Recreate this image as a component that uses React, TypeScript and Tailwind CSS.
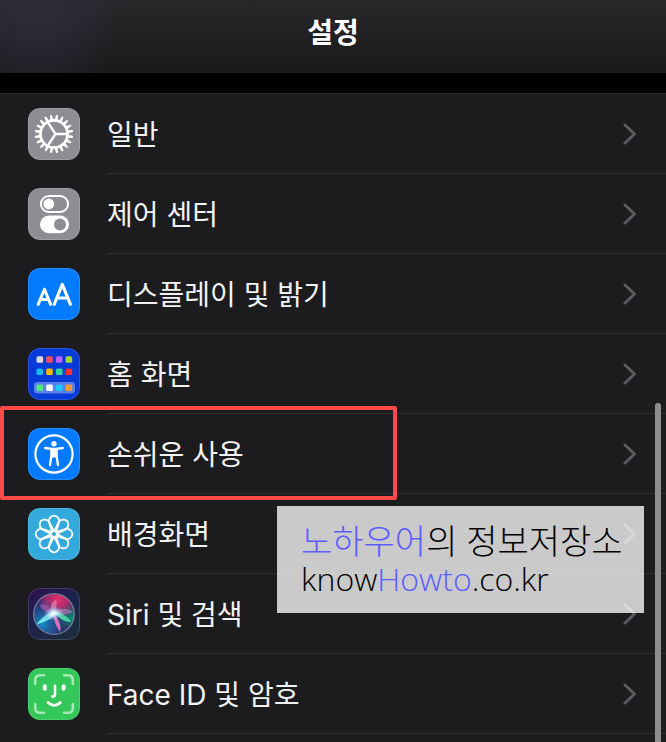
import type { ReactNode } from "react";

const GEAR_TEETH = Array.from({ length: 20 }, (_, i) => i * 18);
const PETALS = Array.from({ length: 8 }, (_, i) => i * 45);

function Tile({ className, children }: { className: string; children: ReactNode }) {
  return (
    <svg viewBox="0 0 52 52" aria-hidden="true" className={`size-[52px] shrink-0 rounded-xl ${className}`}>
      {children}
      <rect x="0.5" y="0.5" width="51" height="51" rx="11.5" fill="none" stroke="#fff" strokeOpacity="0.14" />
    </svg>
  );
}

function GearIcon() {
  return (
    <Tile className="bg-[#8e8d93]">
      <g stroke="#fff" fill="none">
        <circle cx="26" cy="26" r="13.6" strokeWidth="2.8" />
        {GEAR_TEETH.map((angle) => (
          <path key={angle} d="M24.4 12.4 L25.1 6.8 H26.9 L27.6 12.4 Z" fill="#fff" stroke="none" transform={`rotate(${angle + 9} 26 26)`} />
        ))}
        <path d="M39 26 H27.5 L19.6 14 M27.5 26 L19.6 38" strokeWidth="2.3" strokeLinejoin="round" />
      </g>
    </Tile>
  );
}

function ControlIcon() {
  return (
    <Tile className="bg-[#8e8d93]">
      <rect x="12.9" y="8" width="27.2" height="16" rx="8" fill="none" stroke="#fff" strokeWidth="2" />
      <circle cx="20.8" cy="16" r="5.4" fill="#fff" />
      <rect x="12" y="27.6" width="29" height="17.6" rx="8.8" fill="#fff" />
      <circle cx="32" cy="36.4" r="6" fill="#8e8d93" />
    </Tile>
  );
}

function DisplayIcon() {
  return (
    <Tile className="bg-[#047bff]">
      <g fill="none" stroke="#fff" strokeLinecap="round" strokeLinejoin="round">
        <path d="M10.2 36.4 L16.4 21.2 L22.6 36.4 M12.3 31.6 H20.5" strokeWidth="3" />
        <path d="M26.2 36.4 L34.3 16.4 L42.4 36.4 M29 30 H39.6" strokeWidth="3.1" />
      </g>
    </Tile>
  );
}

const HOME_DOTS = [
  ["#d9dae0", "#ff4963", "#b963fa", "#a9d92c"],
  ["#19b9fa", "#ffb900", "#35d3a0", "#ff3030"],
  ["#4fe879", "#ffffff", "#19c6fa", "#ff983b"],
];
const HOME_ROWS = [8.2, 20.4, 36.4];

function HomeIcon() {
  return (
    <Tile className="bg-[#063bd8]">
      <rect x="6" y="34" width="41" height="11.4" rx="3.5" fill="#5c80ed" />
      {HOME_DOTS.map((row, r) =>
        row.map((color, c) => (
          <rect key={color} x={8.5 + c * 9.7} y={HOME_ROWS[r]} width="6.6" height="6.6" rx="1.5" fill={color} />
        )),
      )}
    </Tile>
  );
}

function AccessibilityIcon() {
  return (
    <Tile className="bg-[#047bff]">
      <circle cx="26" cy="26" r="18.6" fill="none" stroke="#fff" strokeWidth="2.2" />
      <circle cx="26" cy="15.8" r="2.7" fill="#fff" />
      <path d="M17.2 20 L23.8 20.9 H28.2 L34.8 20" fill="none" stroke="#fff" strokeWidth="2.3" strokeLinecap="round" />
      <path d="M23.4 21 V28 L22 37 M28.6 21 V28 L30 37" fill="none" stroke="#fff" strokeWidth="2.3" strokeLinecap="round" strokeLinejoin="round" />
      <path d="M22.8 20.8 H29.2 V29.6 H22.8 Z" fill="#fff" />
    </Tile>
  );
}

function WallpaperIcon() {
  return (
    <Tile className="bg-[#34aadc]">
      <g fill="none" stroke="#fff" strokeWidth="1.8">
        {PETALS.map((angle) => (
          <path key={angle} d="M26 23.3 L21.9 15.4 A4.9 4.9 0 1 1 30.1 15.4 Z" strokeLinejoin="round" transform={`rotate(${angle} 26 26)`} />
        ))}
        <circle cx="26" cy="26" r="3.1" strokeWidth="1.5" />
      </g>
    </Tile>
  );
}

function SiriIcon() {
  return (
    <Tile className="bg-[#202347]">
      <defs>
        <linearGradient id="siri-tile" x1="0" y1="0" x2="0.6" y2="1">
          <stop offset="0" stopColor="#30104e" />
          <stop offset="0.5" stopColor="#1b234e" />
          <stop offset="1" stopColor="#1d2b40" />
        </linearGradient>
        <radialGradient id="siri-red" cx="0.62" cy="0.12" r="0.55">
          <stop offset="0" stopColor="#e8306b" />
          <stop offset="0.6" stopColor="#b82b70" stopOpacity="0.8" />
          <stop offset="1" stopColor="#822c80" stopOpacity="0" />
        </radialGradient>
        <radialGradient id="siri-blue" cx="0.2" cy="0.75" r="0.65">
          <stop offset="0" stopColor="#158ccb" />
          <stop offset="1" stopColor="#155e9f" stopOpacity="0" />
        </radialGradient>
        <radialGradient id="siri-green" cx="0.94" cy="0.6" r="0.4">
          <stop offset="0" stopColor="#0c8f78" />
          <stop offset="1" stopColor="#0a6260" stopOpacity="0" />
        </radialGradient>
        <radialGradient id="siri-glow">
          <stop offset="0" stopColor="#fff" />
          <stop offset="0.3" stopColor="#dff8ff" stopOpacity="0.9" />
          <stop offset="1" stopColor="#9fc6ff" stopOpacity="0" />
        </radialGradient>
      </defs>
      <rect width="52" height="52" fill="url(#siri-tile)" />
      <circle cx="26" cy="26" r="20" fill="#34245f" />
      <circle cx="26" cy="26" r="20" fill="url(#siri-red)" />
      <circle cx="26" cy="26" r="20" fill="url(#siri-blue)" />
      <circle cx="26" cy="26" r="20" fill="url(#siri-green)" />
      <path d="M28 24 C20 24 13 30 8.5 36.5 C17 34 25 31 28 24" fill="#7df4f2" fillOpacity="0.85" />
      <path d="M26 26 C23 20 17 14 12 17 C14 23 20 25 26 26" fill="#c766b8" fillOpacity="0.5" />
      <path d="M25 26 C28 20 30 15 28 12 C23 13 21 21 25 26" fill="#f6a0bc" fillOpacity="0.55" />
      <path d="M26 26 C30 20 39 19 45 24 C38 27 32 28 26 26" fill="#bd80c7" fillOpacity="0.6" />
      <path d="M27 24 C33 24 41 29 43 34 C36 34 30 30 27 24" fill="#55edae" fillOpacity="0.8" />
      <path d="M25 26 C26 32 28 39 32 44 C34 37 30 30 25 26" fill="#f779c2" fillOpacity="0.85" />
      <ellipse cx="25.5" cy="25.5" rx="10" ry="7" fill="url(#siri-glow)" transform="rotate(-15 25.5 25.5)" />
      <circle cx="26" cy="26" r="20.3" fill="none" stroke="#8f9bb3" strokeOpacity="0.75" strokeWidth="1.3" />
    </Tile>
  );
}

function FaceIdIcon() {
  return (
    <Tile className="bg-[#34c759]">
      <g fill="none" strokeLinecap="round">
        <path d="M7.2 16 V12 Q7.2 7.2 12 7.2 H16 M36 7.2 H40 Q44.8 7.2 44.8 12 V16 M44.8 36 V40 Q44.8 44.8 40 44.8 H36 M16 44.8 H12 Q7.2 44.8 7.2 40 V36" stroke="#a5e8b5" strokeWidth="2.6" />
        <path d="M16.8 18.2 V20.8 M35.6 18.2 V20.8" stroke="#fff" strokeWidth="4" />
        <path d="M27 17.8 V26 Q27 28.6 24.3 28.6" stroke="#fff" strokeWidth="2.6" />
        <path d="M20 34.6 Q26 40.2 32.4 34.6" stroke="#fff" strokeWidth="2.8" />
      </g>
    </Tile>
  );
}

function Chevron() {
  return (
    <svg viewBox="0 0 14 24" aria-hidden="true" className="h-6 w-3.5 shrink-0">
      <path d="M2 3 L11.5 12 L2 21" fill="none" stroke="#5b5b60" strokeWidth="3" strokeLinecap="round" strokeLinejoin="round" />
    </svg>
  );
}

const ITEMS = [
  { label: "일반", icon: <GearIcon /> },
  { label: "제어 센터", icon: <ControlIcon /> },
  { label: "디스플레이 및 밝기", icon: <DisplayIcon /> },
  { label: "홈 화면", icon: <HomeIcon /> },
  { label: "손쉬운 사용", icon: <AccessibilityIcon />, highlighted: true },
  { label: "배경화면", icon: <WallpaperIcon /> },
  { label: "Siri 및 검색", icon: <SiriIcon /> },
  { label: "Face ID 및 암호", icon: <FaceIdIcon /> },
];

export default function App() {
  return (
    <div className="relative flex min-h-screen flex-col bg-black font-['Inter','Noto_Sans_CJK_KR',sans-serif] text-[#f2f2f4]">
      <header className="flex h-[73px] items-center justify-center bg-[radial-gradient(90px_110px_at_35px_0px,#2d2c3b,#2d2c3b00),linear-gradient(#28282a,#1a1a1b)] pb-2">
        <h1 className="text-[28px] leading-10 font-bold text-white">설정</h1>
      </header>
      <main className="relative mt-5 flex-1 bg-[#1c1c1e]">
        <ul className="border-t border-[#2b2b2d]">
          {ITEMS.map((item) => (
            <li key={item.label} className="relative">
              <button type="button" className="flex h-20 w-full items-center pl-7 text-left">
                {item.icon}
                <span className="ml-[27px] flex h-20 flex-1 items-center justify-between border-b border-[#2f2f32] pr-[29px]">
                  <span className="pt-0.5 text-[28px] leading-10">{item.label}</span>
                  <Chevron />
                </span>
              </button>
              {item.highlighted && (
                <span className="pointer-events-none absolute -top-2 left-0 h-[94px] w-[397px] rounded-xs border-4 border-[#ff4a4a]" />
              )}
            </li>
          ))}
        </ul>
        <div className="absolute top-[310px] right-[5px] bottom-0 w-1.5 rounded-t-full bg-[#8c8c8e]" />
      </main>
      <aside className="absolute top-[506px] right-[22px] h-[107px] w-[367px] bg-white/77 py-4 pl-6 font-['Open_Sans','Noto_Sans_CJK_KR',sans-serif] font-light whitespace-nowrap text-black">
        <p className="text-[34px] leading-[38px]">
          <span className="text-[#5c5cff]">노하우어</span>의 정보저장소
        </p>
        <p className="text-[32px] leading-[38px]">
          know<span className="text-[#5c5cff]">Howto</span>.co.kr
        </p>
      </aside>
    </div>
  );
}
